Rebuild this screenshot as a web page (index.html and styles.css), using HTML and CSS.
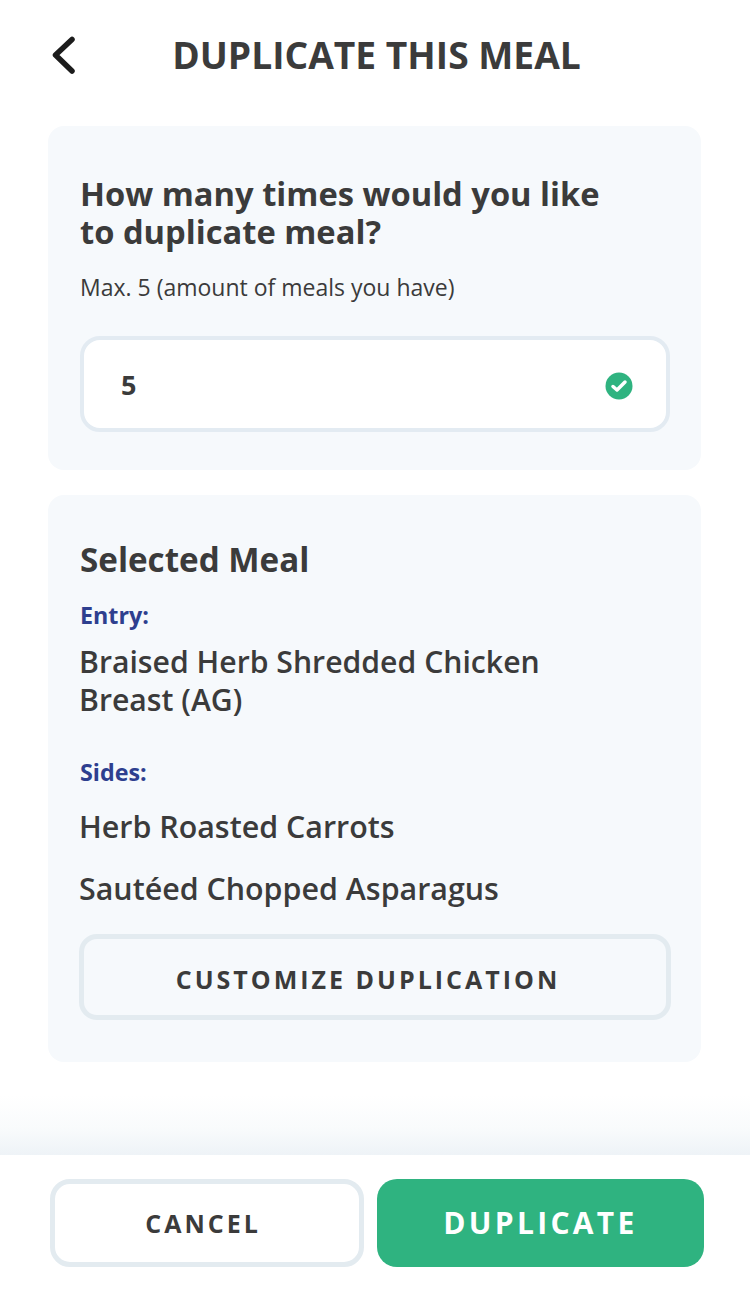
FILE: index.html
```html
<!DOCTYPE html>
<html lang="en">
<head>
    <meta charset="UTF-8">
    <meta name="viewport" content="width=device-width, initial-scale=1.0">
    <title>Duplicate This Meal</title>
    <link rel="stylesheet" href="styles.css">
</head>
<body>
    <div class="page">
        <header class="top-bar">
            <a class="back-link" href="#" aria-label="Back">
                <svg width="26" height="38" viewBox="0 0 26 38" fill="none">
                    <path d="M21 3.500 L4.500 19 L21 35" stroke="#1c1c1c" stroke-width="5.500" stroke-linecap="round" stroke-linejoin="round"/>
                </svg>
            </a>
            <h1>DUPLICATE THIS MEAL</h1>
        </header>

        <main class="content">
            <section class="card card-count">
                <h2>How many times would you like<br>to duplicate meal?</h2>
                <p class="hint">Max. 5 (amount of meals you have)</p>
                <div class="count-field">
                    <span class="count-value">5</span>
                    <svg class="check-icon" width="28" height="28" viewBox="0 0 28 28">
                        <circle cx="14" cy="14" r="13.500" fill="#2fb380"/>
                        <path d="M8 14.500 L12 18 L20 10" fill="none" stroke="#fff" stroke-width="3.500" stroke-linecap="round" stroke-linejoin="round"/>
                    </svg>
                </div>
            </section>

            <section class="card card-meal">
                <h3>Selected Meal</h3>
                <div class="label label-entry">Entry:</div>
                <p class="entry-name">Braised Herb Shredded Chicken<br>Breast (AG)</p>
                <div class="label label-sides">Sides:</div>
                <p class="side-name">Herb Roasted Carrots</p>
                <p class="side-name">Sautéed Chopped Asparagus</p>
                <button class="btn-customize">CUSTOMIZE DUPLICATION</button>
            </section>
        </main>

        <div class="fade"></div>
        <footer class="actions">
            <button class="btn-cancel">CANCEL</button>
            <button class="btn-duplicate">DUPLICATE</button>
        </footer>
    </div>
</body>
</html>
```

FILE: styles.css
```css
* {
    box-sizing: border-box;
}
body {
    margin: 0;
    background-color: #fff;
    font-family: 'Open Sans', sans-serif;
    color: #3b3b3b;
}
h1, h2, h3, p {
    margin: 0;
}
.page {
    height: 1294px;
    display: flex;
    flex-direction: column;
    overflow: hidden;
}
.top-bar {
    height: 126px;
    padding: 36px 48px 0 51px;
    display: grid;
    grid-template-columns: 1fr auto 1fr;
    align-items: start;
}
.back-link {
    display: block;
    height: 38px;
}
h1 {
    font-size: 37.200px;
    font-weight: 700;
    line-height: 38px;
    white-space: nowrap;
}
.content {
    flex: 1;
    padding: 0 49px 0 48px;
    display: flex;
    flex-direction: column;
    gap: 25px;
}
.card {
    background-color: #f6f9fc;
    border-radius: 16px;
    padding: 0 31px 0 32px;
}
.card-count {
    height: 344px;
    padding-top: 49px;
}
h2 {
    font-size: 32.700px;
    font-weight: 700;
    line-height: 38px;
    white-space: nowrap;
}
.hint {
    margin-top: 21px;
    font-size: 23px;
    line-height: 30px;
}
.count-field {
    margin-top: 34px;
    height: 96px;
    background-color: #fff;
    border: 4px solid #e3ebf2;
    border-radius: 20px;
    padding: 0 33px 0 37px;
    display: flex;
    align-items: center;
    justify-content: space-between;
}
.count-value {
    font-size: 27px;
    font-weight: 700;
}
.check-icon {
    margin-top: 3px;
}
.card-meal {
    height: 567px;
    padding-top: 46px;
}
h3 {
    font-size: 33.200px;
    font-weight: 700;
    line-height: 38px;
}
.label {
    font-size: 23.300px;
    font-weight: 700;
    line-height: 30px;
    color: #2e3f8f;
}
.label-entry {
    margin-top: 21px;
}
.label-sides {
    margin-top: 38px;
}
.entry-name {
    margin: 13px 0 0 -1px;
    font-size: 30.200px;
    font-weight: 600;
    line-height: 38px;
    white-space: nowrap;
}
.side-name {
    margin: 22px 0 0 -1px;
    font-size: 30.400px;
    font-weight: 600;
    line-height: 40px;
}
.label-sides + .side-name {
    margin-top: 20px;
}
.btn-customize {
    display: block;
    width: 592px;
    height: 86px;
    margin-top: 25px;
    padding: 3px 14px 0 0;
    margin-left: -1px;
    background: none;
    border: 5px solid #e3ebf0;
    border-radius: 18px;
    font-family: inherit;
    font-size: 25px;
    font-weight: 700;
    letter-spacing: 3px;
    color: #3b3b3b;
}
.fade {
    height: 60px;
    background: linear-gradient(to bottom, #fff, #f9fbfc 55%, #eef3f7);
}
.actions {
    height: 139px;
    padding: 24px 46px 27px 50px;
    background-color: #fff;
    display: flex;
    gap: 13px;
}
.btn-cancel, .btn-duplicate {
    height: 88px;
    border-radius: 20px;
    font-family: inherit;
    font-weight: 700;
}
.btn-cancel {
    width: 314px;
    padding: 0 8px 0 0;
    background-color: #fff;
    border: 5px solid #e3ebf0;
    font-size: 25px;
    letter-spacing: 3px;
    color: #3b3b3b;
}
.btn-duplicate {
    flex: 1;
    background-color: #2fb380;
    border: none;
    padding-bottom: 3px;
    font-size: 30px;
    letter-spacing: 3.300px;
    color: #fff;
}
```
